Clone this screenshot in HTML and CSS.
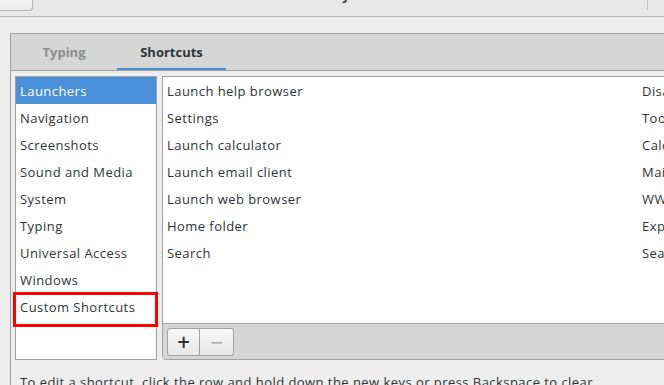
FILE: index.html
```html
<!DOCTYPE html>
<html lang="en">
<head>
    <meta charset="UTF-8">
    <title>Keyboard</title>
    <link rel="stylesheet" href="styles.css">
</head>
<body>
<header class="titlebar">
    <button class="hb-button"></button>
    <span class="title">Keyboard</span>
    <span class="hb-sep"></span>
</header>

<div class="notebook">
    <div class="tabs">
        <div class="tab">Typing</div>
        <div class="tab active">Shortcuts</div>
    </div>

    <div class="page">
        <ul class="sections">
            <li class="selected">Launchers</li>
            <li>Navigation</li>
            <li>Screenshots</li>
            <li>Sound and Media</li>
            <li>System</li>
            <li>Typing</li>
            <li>Universal Access</li>
            <li>Windows</li>
            <li class="custom">Custom Shortcuts<span class="highlight"></span></li>
        </ul>

        <div class="shortcuts">
            <div class="rows">
                <div class="row"><span>Launch help browser</span><span>Disabled</span></div>
                <div class="row"><span>Settings</span><span>Tools</span></div>
                <div class="row"><span>Launch calculator</span><span>Calculator</span></div>
                <div class="row"><span>Launch email client</span><span>Mail</span></div>
                <div class="row"><span>Launch web browser</span><span>WWW</span></div>
                <div class="row"><span>Home folder</span><span>Explorer</span></div>
                <div class="row"><span>Search</span><span>Search</span></div>
            </div>
            <div class="toolbar">
                <div class="linked">
                    <button class="tool-button add">+</button>
                    <button class="tool-button remove" disabled>&minus;</button>
                </div>
            </div>
        </div>
    </div>

    <p class="hint">To edit a shortcut, click the row and hold down the new keys or press Backspace to clear.</p>
</div>
</body>
</html>
```

FILE: styles.css
```css
* {
    box-sizing: border-box;
    margin: 0;
    padding: 0;
}

body {
    font-family: "Open Sans", "DejaVu Sans", sans-serif;
    font-size: 13px;
    color: #2e3436;
    background-color: #ededed;
    height: 385px;
    overflow: hidden;
}

.titlebar {
    display: flex;
    align-items: flex-start;
    height: 17px;
    background-color: #e8e8e8;
    border-bottom: 1px solid #b6b6b6;
    overflow: hidden;
}

.hb-button {
    width: 33px;
    height: 11px;
    background: linear-gradient(#f4f4f4, #ececec);
    border: 1px solid #b6b6b6;
    border-top: none;
    border-left: none;
    border-radius: 0 0 4px 0;
}

.title {
    font-weight: 700;
    line-height: 16px;
    margin-top: -13px;
    margin-left: 293px;
}

.hb-sep {
    width: 1px;
    height: 10px;
    margin-left: auto;
    margin-right: 16px;
    background-color: #c4c4c4;
}

.notebook {
    width: 700px;
    margin: 16px 0 0 10px;
    border: 1px solid #a1a1a1;
    border-right: none;
    height: 400px;
}

.tabs {
    display: flex;
    height: 37px;
    background-color: #d6d6d6;
    border-bottom: 1px solid #a1a1a1;
}

.tab {
    width: 106px;
    line-height: 36px;
    text-align: center;
    font-weight: 700;
    color: #8b8e8f;
}

.tab.active {
    width: 109px;
    color: #2e3436;
    box-shadow: inset 0 -2px #4a90d9;
}

.page {
    display: flex;
    gap: 5px;
    padding: 5px 0 0 4px;
    letter-spacing: 0.45px;
}

.sections {
    list-style: none;
    width: 142px;
    height: 284px;
    background-color: white;
    border: 1px solid #a1a1a1;
}

.sections li {
    height: 27px;
    padding: 1px 0 0 4px;
    line-height: 26px;
    white-space: nowrap;
}

.sections li.selected {
    background-color: #4a90d9;
    color: white;
}

.sections li.custom {
    position: relative;
}

.highlight {
    position: absolute;
    left: -3px;
    top: -1px;
    width: 145px;
    height: 35px;
    border: 3px solid #f00;
}

.shortcuts {
    flex: 1;
    display: flex;
    flex-direction: column;
    height: 284px;
    border: 1px solid #a1a1a1;
    border-radius: 0 0 0 4px;
    overflow: hidden;
}

.rows {
    flex: 1;
    background-color: white;
}

.row {
    display: grid;
    grid-template-columns: 475px auto;
    height: 27px;
    padding: 1px 0 0 4px;
    line-height: 26px;
    white-space: nowrap;
}

.toolbar {
    height: 36px;
    padding: 4px 0 0 4px;
    background-color: #d6d6d6;
    border-top: 1px solid #a1a1a1;
}

.linked {
    display: flex;
}

.tool-button {
    width: 33px;
    height: 28px;
    font-family: "DejaVu Sans", sans-serif;
    font-size: 17px;
    font-weight: 700;
    line-height: 26px;
    background: linear-gradient(#f7f7f7, #e8e8e8);
    border: 1px solid #a1a1a1;
    color: #2e3436;
}

.tool-button.add {
    border-radius: 3px 0 0 3px;
}

.tool-button.remove {
    width: 34px;
    border-left: none;
    border-radius: 0 3px 3px 0;
    color: #a7a9a9;
    font-weight: 400;
}

.hint {
    margin-top: 13px;
    padding-left: 9px;
    line-height: 18px;
    letter-spacing: 0.45px;
    white-space: nowrap;
}
```
